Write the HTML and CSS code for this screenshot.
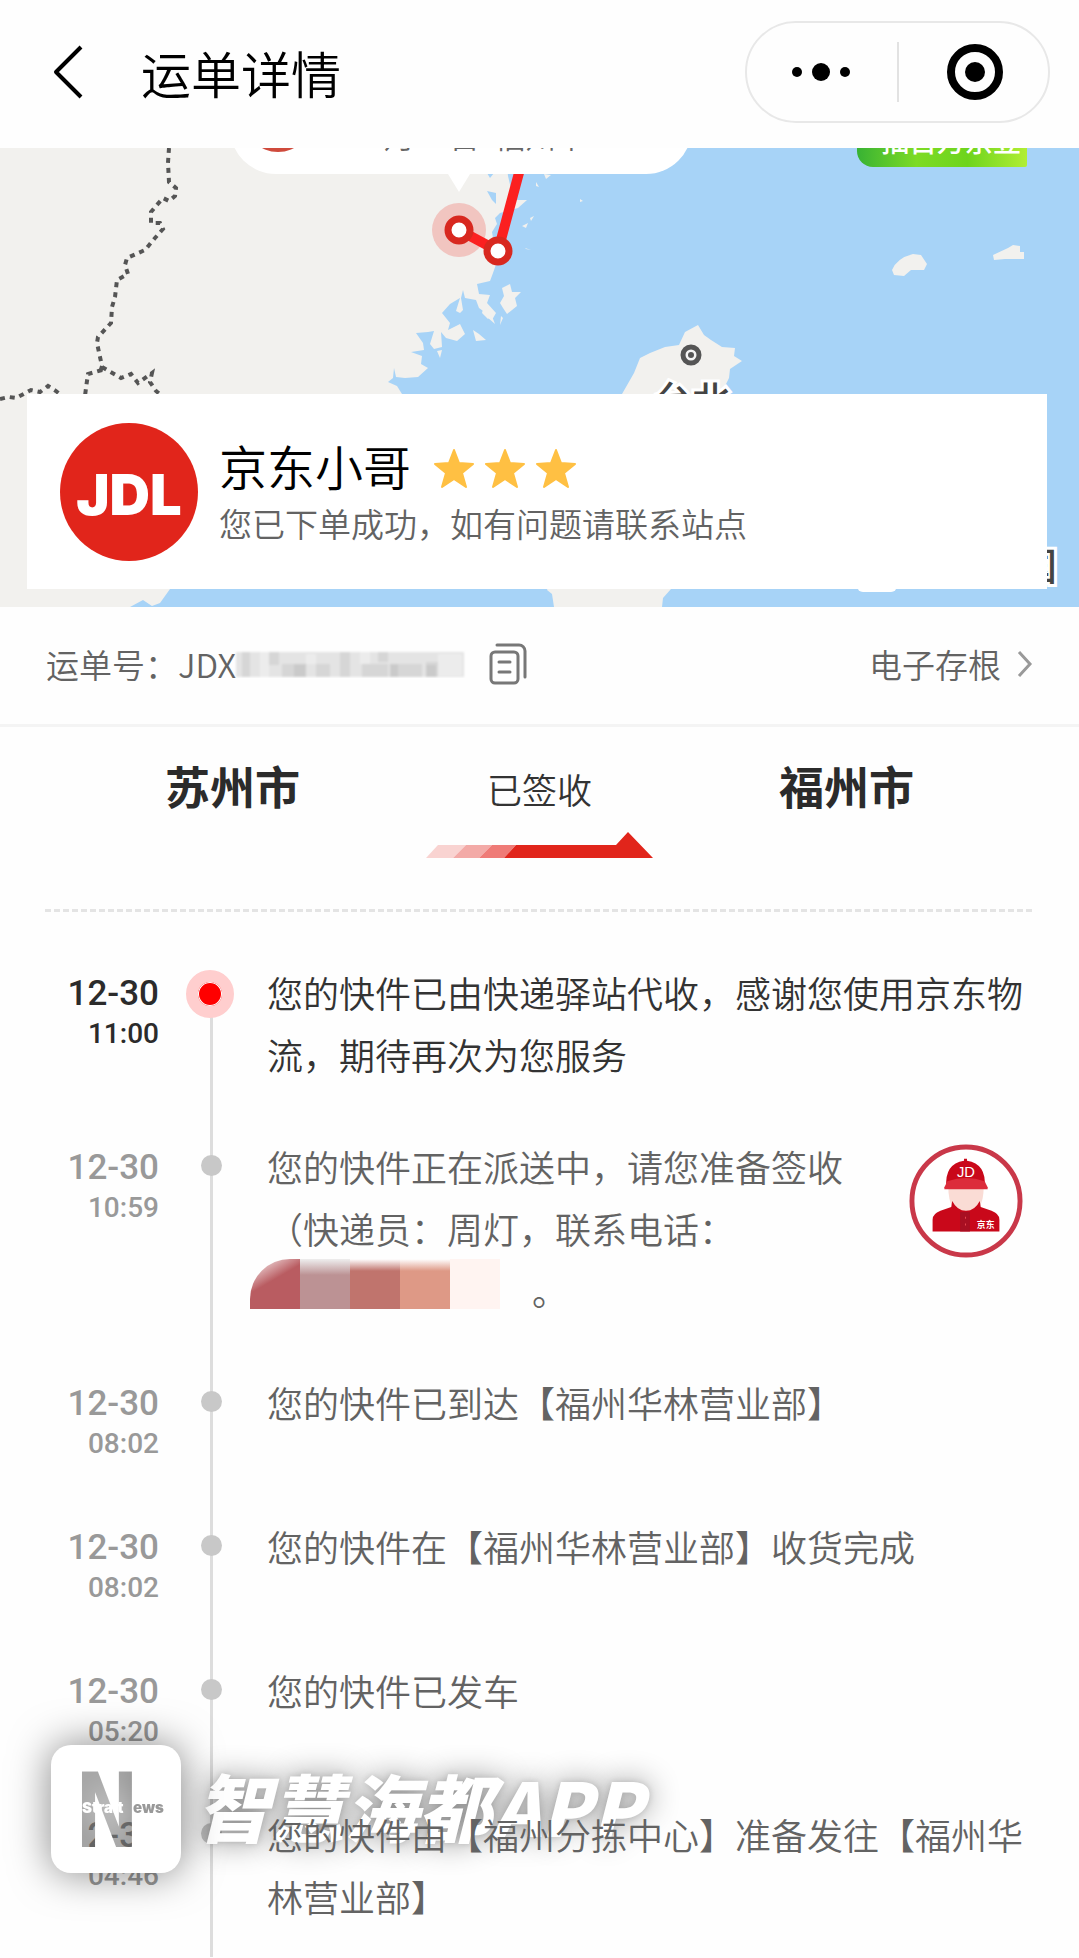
FILE: index.html
```html
<!DOCTYPE html>
<html lang="zh-CN">
<head>
<meta charset="utf-8">
<meta name="viewport" content="width=device-width, initial-scale=1">
<title>运单详情</title>
<link rel="stylesheet" href="styles.css">
</head>
<body>
<header class="topbar">
  <button class="icon-button" type="button" aria-label="返回">
    <svg width="30" height="56" viewBox="0 0 30 56" fill="none" stroke="#000" stroke-width="4" stroke-linejoin="round"><path d="M28 3 3 28 28 53"/></svg>
  </button>
  <h1 class="title">运单详情</h1>
  <div class="capsule">
    <button class="icon-button capsule-part" type="button" aria-label="更多">
      <svg width="60" height="20" viewBox="0 0 60 20"><circle cx="5" cy="10" r="5"/><circle cx="29" cy="10" r="9"/><circle cx="53" cy="10" r="5"/></svg>
    </button>
    <span class="capsule-divider"></span>
    <button class="icon-button capsule-part" type="button" aria-label="关闭">
      <svg width="60" height="58" viewBox="0 0 60 58"><circle cx="32" cy="29" r="24" fill="none" stroke="#000" stroke-width="8"/><circle cx="32" cy="29" r="10"/></svg>
    </button>
  </div>
</header>

<section class="map">
  <svg class="map-canvas" viewBox="0 0 1079 459" preserveAspectRatio="xMidYMid slice" aria-hidden="true">
    <rect width="1079" height="459" fill="#a7d3f7"/>
    <g fill="#f2f1ee">
      <path d="M0 0H505L508 28 512 45 507 52 527 52 518 60 500 65 495 70 497 76 492 84 494 96 500 105 493 125 490 133 477 136 479 146 490 147 487 155 496 165 492 172 486 165 479 160 476 152 465 150 463 142 461 150 463 162 460 165 456 163 460 150 450 156 442 165 450 175 448 182 460 176 465 186 457 193 446 190 441 184 442 199 434 201 430 196 434 183 428 184 416 185 423 195 424 202 411 204 422 208 421 216 428 220 418 229 405 230 396 229 394 220 393 230 388 234 397 238 402 246 300 350 170 441 165 448 160 455 152 458 143 452 130 459H0Z"/>
      <path d="M622 246 634 225 640 210 650 205 665 199 679 197 685 184 698 177 704 187 711 192 722 199 735 200 734 208 742 213 730 221 729 230 724 240 722 246 671 441 663 450 662 459H554L552 446 547 442Z"/>
      <path d="M892 122Q897 110 913 106L921 107 927 116 924 122 911 122 904 128 894 127Z"/>
      <path d="M993 107 1008 100 1013 97 1020 98 1020 104 1024 104 1024 111 1005 111 994 112Z"/>
      <path d="M502 140 510 136 512 144 521 144 515 150 517 158 507 166 503 160 500 155 504 148Z"/>
      <path d="M484 157 491 168 488 171 482 165ZM490 163 495 176 487 169ZM473 182 479 186 486 192 476 193ZM437 203 442 202 440 210ZM501 168 503 170 500 177ZM522 78 528 75 526 80ZM530 70 534 68 531 73ZM536 34 539 39 536 38ZM544 26 551 27 546 31ZM580 51 583 53 580 54ZM525 100 531 102 526 101Z"/>
    </g>
    <path fill="#a7d3f7" d="M487 43 496 45 496 56 492 52ZM487 25 494 25 490 30Z"/>
    <g fill="none" stroke="#555" stroke-width="4" stroke-dasharray="5 5">
      <path d="M169 0 168 15 169 34 176 40 175 48 169 53 163 50 156 58 151 64 151 75 160 75 163 81 155 90 145 102 127 110 125 117 128 126 117 132 115 149 112 159 111 175 98 189 97 195 100 209 102 218 100 225"/>
      <path d="M102 219 107 222 121 230 131 226 138 235 152 225 150 234 156 243 162 248"/>
      <path d="M102 222 88 226 86 240 85 248"/>
      <path d="M0 251 9 249 16 250 31 242 40 244 48 238 56 243 62 248"/>
    </g>
    <circle cx="691" cy="207" r="8" fill="#f4f4f4" stroke="#555" stroke-width="5"/>
    <circle cx="691" cy="207" r="3" fill="#555"/>
    <text class="map-label" x="654" y="266">台北</text>
    <text class="map-label" x="1019" y="432">国</text>
    <rect x="857" y="420" width="40" height="24" rx="6" fill="#fff"/>
    <circle cx="459" cy="82" r="27" fill="#ef2a20" fill-opacity=".22"/>
    <path d="M459 82 498 103 523 10" fill="none" stroke="#fb2020" stroke-width="10"/>
    <circle cx="459" cy="82" r="11" fill="#fff" stroke="#d8281f" stroke-width="7"/>
    <circle cx="498" cy="103" r="11" fill="#fff" stroke="#d8281f" stroke-width="7"/>
  </svg>
  <div class="callout"><span class="callout-logo"></span><span class="callout-text">12月30日&nbsp; 福州市</span></div>
  <a class="promo" href="#">抽百万京豆</a>
  <div class="courier">
    <svg width="138" height="138" viewBox="0 0 138 138" role="img" aria-label="JDL"><circle cx="69" cy="69" r="69" fill="#e1251b"/><text class="jdl" x="69" y="92" text-anchor="middle">JDL</text></svg>
    <div>
      <div class="courier-name">京东小哥
        <svg class="stars" width="144" height="42" viewBox="0 0 144 42" fill="#ffc043" stroke="#ffc043" stroke-width="2" stroke-linejoin="round" role="img" aria-label="三星">
          <path id="star" d="m21 2 5 13 14 1-11 9 4 14-12-8-12 8 4-14L2 16l14-1Z"/><use href="#star" x="51"/><use href="#star" x="102"/>
        </svg>
      </div>
      <p class="courier-note">您已下单成功，如有问题请联系站点</p>
    </div>
  </div>
</section>

<section class="waybill">
  <span>运单号：JDX</span>
  <svg class="redacted" width="234" height="28" viewBox="0 0 234 28" preserveAspectRatio="none" aria-hidden="true">
    <defs><filter id="soft"><feGaussianBlur stdDeviation="1"/></filter></defs>
    <g filter="url(#soft)">
    <rect x="4" y="2" width="228" height="25" fill="#e4e4e4"/>
    <path fill="#d6d6d6" d="M10 2h8v25h-8zM37 2h10v13H37zM50 14h24v13H50zM84 14h14v13H84zM108 2h10v25h-10zM130 14h26v13h-26zM146 2h10v10h-10zM166 14h24v13h-24zM194 12h12v15h-12z"/>
    <path fill="#ececec" d="M28 2h9v25h-9zM74 4h10v10H74zM128 2h10v12h-10zM206 4h24v22h-24z"/>
    <path fill="#cacaca" d="M62 14h12v13H62zM158 14h8v13h-8zM194 15h10v12h-10z"/>
    </g>
  </svg>
  <button class="icon-button" type="button" aria-label="复制运单号">
    <svg width="38" height="42" viewBox="0 0 38 42" fill="none" stroke="#777" stroke-width="3" stroke-linecap="round"><rect x="2" y="9" width="27" height="31" rx="4"/><path d="M10 19h11M10 29h11M8 2h22a6 6 0 0 1 6 6v26"/></svg>
  </button>
  <a class="receipt" href="#">电子存根
    <svg width="16" height="28" viewBox="0 0 16 28" fill="none" stroke="#999" stroke-width="3"><path d="M2 2 13 14 2 26"/></svg>
  </a>
</section>

<section class="route">
  <h2 class="city">苏州市</h2>
  <div class="state">
    <span>已签收</span>
    <svg width="228" height="28" viewBox="0 0 228 28" aria-hidden="true"><path fill="#f9d3d1" d="M12 14h28L27 27H0Z"/><path fill="#f3aaa7" d="M40 14h26L53 27H27Z"/><path fill="#ef7b77" d="M66 14h24L78 27H53Z"/><path fill="#e1251b" d="M90 14h100L202 1 227 27H78Z"/></svg>
  </div>
  <h2 class="city">福州市</h2>
</section>

<main class="tracking">
  <ol class="timeline">
    <li class="event current">
      <time class="when"><b>12-30</b>11:00</time><span class="rail"><i class="dot"></i></span>
      <p class="what">您的快件已由快递驿站代收，感谢您使用京东物流，期待再次为您服务</p>
    </li>
    <li class="event">
      <time class="when"><b>12-30</b>10:59</time><span class="rail"><i class="dot"></i></span>
      <div class="what with-avatar">
        <p>您的快件正在派送中，请您准备签收<br>（快递员：周灯，联系电话：<br><span class="phone-mask"><i></i><i></i><i></i><i></i><i></i></span>。</p>
        <svg class="avatar" width="114" height="116" viewBox="0 0 116 116" role="img" aria-label="快递员">
          <circle cx="58" cy="58" r="55" fill="#fff" stroke="#c93849" stroke-width="5"/>
          <path fill="#fadcd5" d="M40 44h36q0 26-18 29-18-3-18-29Z"/>
          <path fill="#c9081a" d="M24 89V77q0-6 8-9l11-4 1-6q5 10 14 10t14-10l1 6 11 4q8 3 8 9v12Z"/>
          <path fill="#a80f22" d="M52 69h10v20H52Z"/><path fill="#e7464f" d="M57 74h1v2h-1zM57 81h1v2h-1z"/>
          <path fill="#c9081a" d="M38 44q-2-24 18-27v-2h3v2q20 3 18 27Z"/>
          <path fill="#dc2c3b" d="M39 38q19-7 38 0l3 6v2H36v-2Z"/>
          <text class="cap-text" x="58" y="34" text-anchor="middle">JD</text>
          <text class="chest-text" x="78" y="85" text-anchor="middle">京东</text>
        </svg>
      </div>
    </li>
    <li class="event">
      <time class="when"><b>12-30</b>08:02</time><span class="rail"><i class="dot"></i></span>
      <p class="what">您的快件已到达【福州华林营业部】</p>
    </li>
    <li class="event">
      <time class="when"><b>12-30</b>08:02</time><span class="rail"><i class="dot"></i></span>
      <p class="what">您的快件在【福州华林营业部】收货完成</p>
    </li>
    <li class="event">
      <time class="when"><b>12-30</b>05:20</time><span class="rail"><i class="dot"></i></span>
      <p class="what">您的快件已发车</p>
    </li>
    <li class="event last">
      <time class="when"><b>12-30</b>04:46</time><span class="rail"><i class="dot"></i></span>
      <p class="what">您的快件由【福州分拣中心】准备发往【福州华林营业部】</p>
    </li>
  </ol>
  <svg class="badge" width="130" height="128" viewBox="0 0 130 128" role="img" aria-label="Strait News">
    <mask id="cut"><rect width="130" height="128" fill="#fff"/><text class="badge-n" x="56" y="102" text-anchor="middle">N</text></mask>
    <rect width="130" height="128" rx="20" fill="#fff" mask="url(#cut)"/>
    <text class="badge-word" x="31" y="68" fill="#fff">Strait</text>
    <text class="badge-word" x="82" y="68" fill="#999">ews</text>
  </svg>
  <div class="watermark">智慧海都APP</div>
</main>
</body>
</html>
```
FILE: styles.css
```css
* { box-sizing: border-box; }

body {
  margin: 0;
  background: #fefefe;
  color: #636363;
  font-family: "Noto Sans CJK SC", sans-serif;
  font-weight: 350;
}

h1, h2, p, ol { margin: 0; padding: 0; }
a { color: inherit; text-decoration: none; }
svg { display: block; flex: none; }

.icon-button {
  display: flex;
  align-items: center;
  justify-content: center;
  padding: 0;
  border: 0;
  background: none;
}

/* Top bar */
.topbar {
  display: flex;
  align-items: center;
  height: 148px;
  padding: 0 29px 4px 53px;
}
.title {
  margin-left: 58px;
  color: #000;
  font-size: 50px;
  font-weight: 350;
  line-height: 68px;
}
.capsule {
  display: flex;
  align-items: center;
  width: 305px;
  height: 102px;
  margin-left: auto;
  border: 2px solid #e8e8e8;
  border-radius: 51px;
}
.capsule-part { flex: 1; height: 100%; }
.capsule-divider { width: 2px; height: 60px; background: #e2e2e2; }

/* Map */
.map {
  position: relative;
  overflow: hidden;
  height: 459px;
  padding: 246px 32px 0 27px;
}
.map-canvas { position: absolute; inset: 0; width: 100%; height: 100%; }
.map-label {
  fill: #444;
  font-size: 38px;
  font-weight: 500;
  stroke: #fff;
  stroke-width: 6px;
  paint-order: stroke;
}
.callout {
  position: absolute;
  top: -66px;
  left: 230px;
  display: flex;
  align-items: center;
  gap: 38px;
  width: 462px;
  height: 92px;
  padding: 0 0 20px 14px;
  border-radius: 46px;
  background: #fff;
  color: #666;
  font-size: 31px;
  white-space: nowrap;
}
.callout::after {
  content: "";
  position: absolute;
  top: 92px;
  left: 218px;
  border: 11px solid transparent;
  border-top: 18px solid #fff;
}
.callout-logo { width: 68px; height: 68px; border-radius: 50%; background: #cf4a3c; }
.callout-text { padding-top: 32px; }
.promo {
  position: absolute;
  top: -28px;
  right: 52px;
  width: 170px;
  height: 47px;
  padding-left: 24px;
  border-radius: 4px 4px 2px 16px;
  background: linear-gradient(90deg, #38b234, #7ddb25 35%, #6ed41d 65%, #b1ee35);
  color: #fff;
  font-size: 28px;
  font-weight: 500;
  line-height: 40px;
}
.courier {
  position: relative;
  display: flex;
  align-items: center;
  gap: 21px;
  height: 195px;
  padding-left: 33px;
  background: #fff;
}
.jdl { fill: #fff; font-family: Inter, sans-serif; font-size: 56px; font-weight: 900; }
.courier-name {
  display: flex;
  align-items: center;
  gap: 22px;
  color: #000;
  font-size: 48px;
  line-height: 62px;
}
.stars { margin-top: 8px; }
.courier-note { font-size: 33px; line-height: 54px; }

/* Waybill number */
.waybill {
  display: flex;
  align-items: center;
  height: 120px;
  padding: 0 46px 3px;
  border-bottom: 3px solid #f4f4f4;
  font-size: 33px;
  line-height: 48px;
}
.redacted { margin: 0 23px 0 -4px; }
.receipt { display: flex; align-items: center; gap: 16px; margin-left: auto; }

/* Route */
.route {
  display: flex;
  justify-content: space-between;
  height: 182px;
  padding: 29px 165px 0;
}
.city { color: #2b2b2b; font-size: 45px; font-weight: 700; line-height: 60px; }
.state {
  display: flex;
  flex-direction: column;
  align-items: center;
  gap: 12px;
  padding-top: 3px;
  color: #333;
  font-size: 35px;
  line-height: 60px;
}

/* Timeline */
.tracking { position: relative; }
.tracking::before {
  content: "";
  display: block;
  height: 3px;
  margin: 0 44px 49px 45px;
  background: repeating-linear-gradient(90deg, #e4e4e4 0 6px, transparent 6px 9px);
}
.timeline { list-style: none; }
.event {
  display: grid;
  grid-template-columns: 159px 105px 1fr;
  min-height: 144px;
  padding-right: 56px;
}
.when {
  padding-top: 12px;
  color: #999;
  font-family: Roboto, sans-serif;
  font-size: 28px;
  font-weight: 500;
  line-height: 38px;
  text-align: right;
}
.when b { display: block; font-size: 35px; font-weight: 500; line-height: 42px; }
.rail {
  display: flex;
  justify-content: center;
  padding-top: 20px;
  background: linear-gradient(#ddd, #ddd) center / 3px 100% no-repeat;
}
.dot { width: 21px; height: 21px; border-radius: 50%; background: #c8c8c8; }
.what { position: relative; z-index: 2; padding: 0 0 50px 3px; font-size: 36px; line-height: 62px; }
.last .what { padding-bottom: 30px; }
.current .when { color: #2b2b2b; }
.current .what { color: #333; }
.current .rail { padding: 9px 3px 0 0; background-position: center 30px; }
.current .dot { width: 48px; height: 48px; border: 12px solid #ffcece; background: #f00; box-shadow: inset 0 0 0 1px #fff; }
.with-avatar { display: flex; justify-content: space-between; align-items: flex-start; }
.avatar { margin-top: 8px; }
.cap-text { fill: #fff; font-family: "Liberation Sans", sans-serif; font-size: 15px; }
.chest-text { fill: #fff; font-size: 9px; font-weight: 700; }

.phone-mask { display: inline-flex; height: 50px; margin: 0 32px 0 -17px; vertical-align: -3px; }
.phone-mask i { width: 50px; background: linear-gradient(#fff, #c0746d 12px); }
.phone-mask i:nth-child(1) { border-top-left-radius: 40px; background: linear-gradient(150deg, #fff, #b95c61 30px); }
.phone-mask i:nth-child(2) { background: linear-gradient(#eee, #bc9294 16px); }
.phone-mask i:nth-child(4) { background: linear-gradient(#fff, #de9986 12px); }
.phone-mask i:nth-child(5) { background: #fff4f1; }

/* Watermark floating over the list */
.badge {
  position: absolute;
  bottom: 84px;
  left: 51px;
  z-index: 3;
  filter: drop-shadow(0 0 20px rgba(0, 0, 0, .5));
}
.badge-n { fill: #000; font-family: "DejaVu Sans Mono", monospace; font-size: 103px; font-weight: 700; }
.badge-word { font-family: Inter, sans-serif; font-size: 15px; font-weight: 900; }
.watermark {
  position: absolute;
  bottom: 108px;
  left: 196px;
  z-index: 1;
  color: #fff;
  font-size: 74px;
  font-style: italic;
  font-weight: 900;
  line-height: 88px;
  text-shadow: 0 0 6px rgba(0, 0, 0, .15), 0 0 30px rgba(0, 0, 0, .45);
}
```
